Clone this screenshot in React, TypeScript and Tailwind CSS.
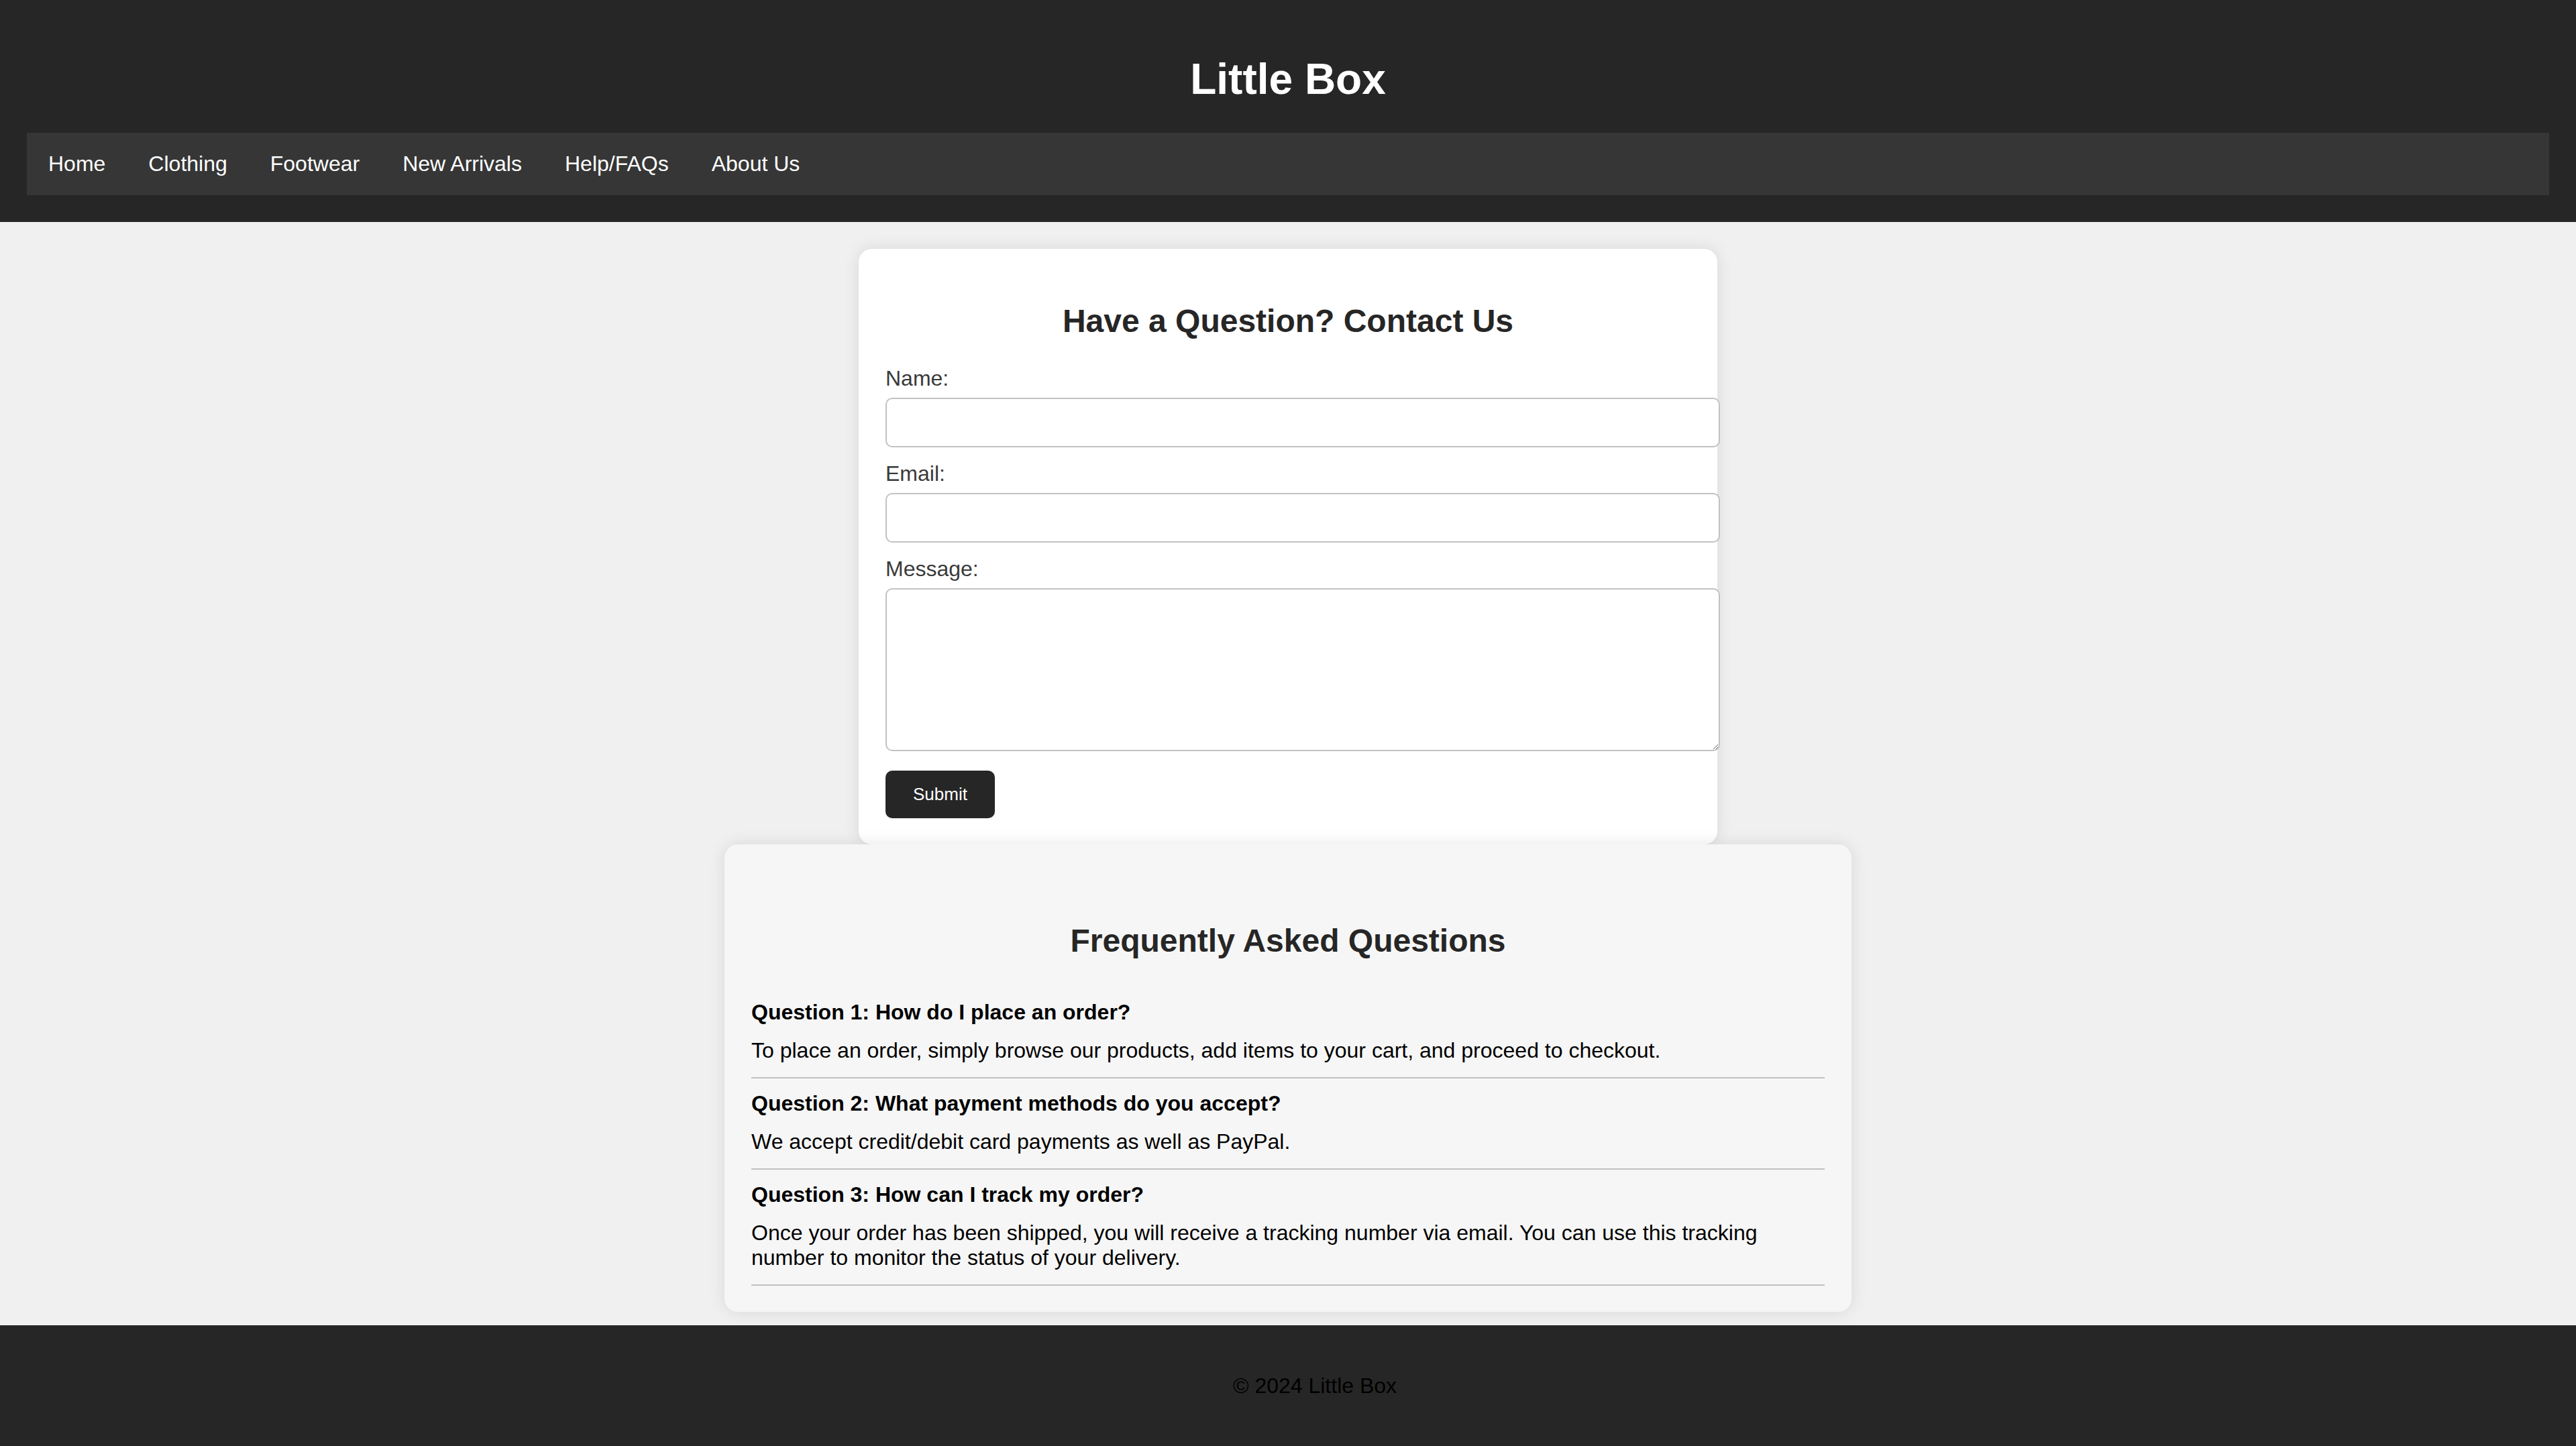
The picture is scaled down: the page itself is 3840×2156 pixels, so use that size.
import React from 'react';

const navLinks = ['Home', 'Clothing', 'Footwear', 'New Arrivals', 'Help/FAQs', 'About Us'];

const faqs = [
  {
    q: 'Question 1: How do I place an order?',
    a: 'To place an order, simply browse our products, add items to your cart, and proceed to checkout.',
  },
  {
    q: 'Question 2: What payment methods do you accept?',
    a: 'We accept credit/debit card payments as well as PayPal.',
  },
  {
    q: 'Question 3: How can I track my order?',
    a: 'Once your order has been shipped, you will receive a tracking number via email. You can use this tracking number to monitor the status of your delivery.',
  },
];

function Field({ label, id, multiline }: { label: string; id: string; multiline?: boolean }) {
  return (
    <>
      <label htmlFor={id} className="mb-[10px] block text-[32px] leading-[37px] text-[#3a3a3a]">
        {label}
      </label>
      {multiline ? (
        <textarea
          id={id}
          className="mb-[29px] block h-[243px] w-[1244px] rounded-[10px] border-2 border-[#c2c2c2] bg-white outline-none"
        />
      ) : (
        <input
          id={id}
          type="text"
          className="mb-[21px] block h-[74px] w-[1244px] rounded-[10px] border-2 border-[#c2c2c2] bg-white outline-none"
        />
      )}
    </>
  );
}

export default function App() {
  return (
    <div className="bg-[#f0f0f0] font-['Liberation_Sans',Arial,sans-serif]">
      {/* header */}
      <header className="bg-[#262626] p-[40px]">
        <h1 className="mt-[41px] mb-[43px] text-center text-[64px] font-bold leading-[74px] text-white">
          Little Box
        </h1>
        <nav className="flex h-[93px] items-center bg-[#363636]">
          {navLinks.map((link) => (
            <a key={link} href="#" className="px-[32px] text-[32px] leading-[37px] text-white">
              {link}
            </a>
          ))}
        </nav>
      </header>

      <main className="flex flex-col items-center pt-[40px] pb-[20px]">
        {/* contact form */}
        <section className="w-[1280px] rounded-[20px] bg-white px-[40px] pt-[40px] pb-[39px] shadow-[0_0_25px_rgba(0,0,0,0.1)]">
          <h2 className="my-[40px] text-center text-[48px] font-bold leading-[55px] text-[#262626]">
            Have a Question? Contact Us
          </h2>
          <form onSubmit={(e) => e.preventDefault()}>
            <Field label="Name:" id="name" />
            <Field label="Email:" id="email" />
            <Field label="Message:" id="message" multiline />
            <button
              type="submit"
              className="block h-[71px] w-[163px] rounded-[10px] bg-[#262626] text-[26px] text-white"
            >
              Submit
            </button>
          </form>
        </section>

        {/* faq */}
        <section className="w-[1680px] rounded-[20px] bg-[#f6f6f6] px-[40px] pt-[76px] pb-[39px] shadow-[0_0_25px_rgba(0,0,0,0.1)]">
          <h2 className="mt-[40px] mb-[42px] text-center text-[48px] font-bold leading-[55px] text-[#262626]">
            Frequently Asked Questions
          </h2>
          {faqs.map((item) => (
            <div key={item.q} className="border-b-2 border-[#c0c0c0] pt-[19px]">
              <h3 className="mb-[20px] text-[32px] font-bold leading-[37px] text-black">{item.q}</h3>
              <p className="mb-[21px] text-[32px] leading-[37px] text-black">{item.a}</p>
            </div>
          ))}
        </section>
      </main>

      <footer className="bg-[#262626] py-[40px] pl-[80px]">
        <p className="my-[32px] text-center text-[32px] leading-[37px] text-black">© 2024 Little Box</p>
      </footer>
    </div>
  );
}
